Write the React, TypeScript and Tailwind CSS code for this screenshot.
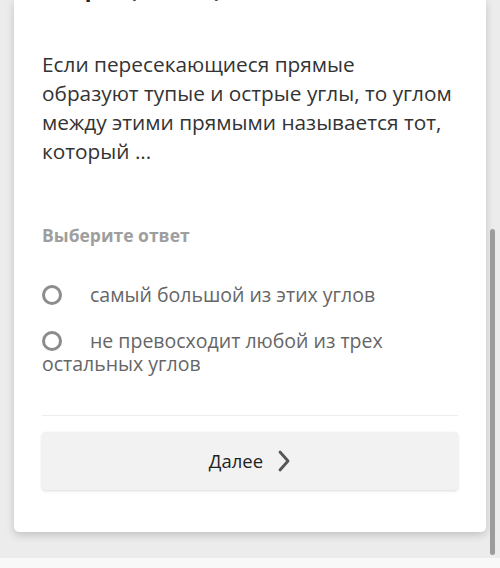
export default function App() {
  return (
    <div className="w-[500px] h-[568px] overflow-hidden bg-[#ececec] flex flex-col relative font-['Open_Sans',sans-serif]">
      {/* Card */}
      <div className="ml-[14px] w-[472px] bg-white rounded-b-[5px] shadow-[0_3px_8px_rgba(0,0,0,0.18)] px-[28px] pb-[42px]">
        {/* Heading, scrolled mostly out of view */}
        <div className="h-[7px] overflow-hidden flex items-end">
          <h2 className="text-[22px] leading-[30px] font-bold text-[#222] whitespace-nowrap translate-y-[-4px]">Вопрос (1 из 10)</h2>
        </div>

        <p className="mt-[43px] text-[20.8px] leading-[29px] text-[#333]">
          Если пересекающиеся прямые<br />
          образуют тупые и острые углы, то углом<br />
          между этими прямыми называется тот,<br />
          который ...
        </p>

        <div className="mt-[57px] text-[17.5px] leading-[24px] font-bold text-[#9e9e9e]">Выберите ответ</div>

        <div className="mt-[36px] flex flex-col gap-[23px]">
          <Option text="самый большой из этих углов" />
          <Option text="не превосходит любой из трех остальных углов" />
        </div>

        <div className="mt-[40px] h-px bg-[#ededed]" />

        <button className="mt-[16px] w-full h-[58px] bg-[#f2f2f2] rounded-[4px] shadow-[0_1px_3px_rgba(0,0,0,0.15)] flex items-center justify-center gap-[14px]">
          <span className="text-[18.5px] text-[#222]">Далее</span>
          <svg width="14" height="22" viewBox="0 0 14 22" fill="none">
            <path d="M3 2 L11 11 L3 20" stroke="#555" strokeWidth="2.8" strokeLinecap="round" strokeLinejoin="round" />
          </svg>
        </button>
      </div>

      <div className="flex-1" />
      <div className="h-[10px] bg-[#f8f8f8]" />

      {/* Scrollbar thumb */}
      <div className="absolute right-[5px] top-[229px] w-[5px] h-[326px] rounded-full bg-[#9c9c9c]" />
    </div>
  );
}

function Option({ text }: { text: string }) {
  return (
    <div className="text-[19.5px] leading-[23px] text-[#666]">
      <span className="inline-block align-[-3px] w-[20px] h-[20px] rounded-full border-[3px] border-[#8c8c8c] mr-[28px]" />
      {text}
    </div>
  );
}
